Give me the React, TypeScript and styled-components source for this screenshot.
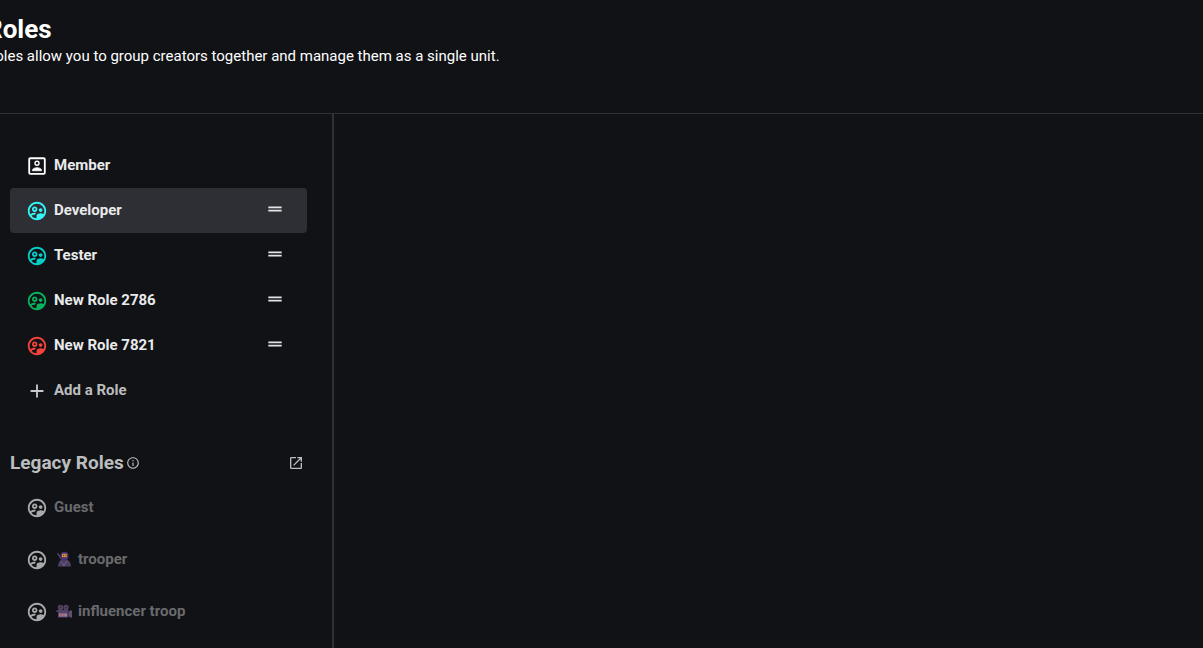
import React, { useState } from "react";
import styled, { createGlobalStyle } from "styled-components";
import {
  MdAdd,
  MdDragHandle,
  MdInfoOutline,
  MdLaunch,
  MdOutlineSupervisedUserCircle,
} from "react-icons/md";

const GlobalStyle = createGlobalStyle`
  *, *::before, *::after { box-sizing: border-box; }
  body {
    margin: 0;
    background: #111216;
    color: #ffffff;
    font-family: Roboto, "Liberation Sans", sans-serif;
    overflow: hidden;
  }
  button { font: inherit; }
`;

const Page = styled.div`
  display: flex;
  flex-direction: column;
  min-height: 100vh;
`;

const Header = styled.header`
  padding: 13px 0 46px;
  margin-left: -14px;
  border-bottom: 1px solid #303136;
`;

const Title = styled.h1`
  margin: 0;
  font-size: 26px;
  line-height: 32px;
  font-weight: 700;
`;

const Description = styled.p`
  margin: 0;
  font-size: 15px;
  line-height: 22px;
`;

const Content = styled.div`
  display: flex;
  flex: 1;
`;

const Sidebar = styled.nav`
  flex: 0 0 334px;
  padding: 29px 25px 0 10px;
  border-right: 2px solid #303136;
`;

const Details = styled.main`
  flex: 1;
`;

const List = styled.ul`
  margin: 0;
  padding: 0;
  list-style: none;
`;

const RoleIcon = styled.span<{ $color: string }>`
  display: flex;
  padding-top: 1px;
  color: ${(p) => p.$color};
  font-size: 22px;
`;

const Row = styled.li<{ $selected?: boolean; $tall?: boolean }>`
  display: flex;
  align-items: center;
  height: ${(p) => (p.$tall ? 52 : 45)}px;
  padding: ${(p) => (p.$tall ? "0 22px 0 0" : "0 22px 2px 0")};
  border-radius: 4px;
  background: ${(p) => (p.$selected ? "#2e2f34" : "transparent")};

  ${RoleIcon} {
    padding-top: ${(p) => (p.$tall ? 1 : 3)}px;
  }
`;

const RoleButton = styled.button<{ $tone?: string }>`
  display: flex;
  flex: 1;
  align-items: center;
  gap: 6px;
  height: 100%;
  padding: 0 0 0 16px;
  border: 0;
  background: none;
  color: ${(p) => p.$tone ?? "#e9eaeb"};
  font-size: 15px;
  line-height: 20px;
  font-weight: 700;
  text-align: left;
  cursor: pointer;
`;

const HandleButton = styled.button`
  display: flex;
  padding: 0 0 1px;
  border: 0;
  background: none;
  color: #e4e5e6;
  font-size: 20px;
  cursor: grab;
`;

const LegacyHeader = styled.div`
  display: flex;
  align-items: center;
  gap: 2px;
  height: 36px;
  margin-top: 32px;
  padding-right: 3px;
  color: #bcbdbf;
`;

const LegacyTitle = styled.h2`
  margin: 0;
  font-size: 19px;
  line-height: 24px;
  font-weight: 700;
`;

const InfoButton = styled.button`
  display: flex;
  padding: 0;
  border: 0;
  background: none;
  color: inherit;
  font-size: 14px;
`;

const LaunchLink = styled.a`
  display: flex;
  margin-left: auto;
  color: inherit;
  font-size: 16px;
`;

const Emoji = styled.svg`
  width: 16px;
  height: 16px;
  margin: 0 2px;
  opacity: 0.85;
`;

const LegacyLabel = styled.span`
  display: flex;
  align-items: center;
  gap: 4px;
`;

const MemberIcon = () => (
  <svg width="1em" height="1em" viewBox="0 0 24 24" fill="none" stroke="currentColor" aria-hidden="true">
    <rect x="3.500" y="3.500" width="17" height="17" rx="1.200" strokeWidth="2" />
    <circle cx="12" cy="9" r="2.200" strokeWidth="1.500" />
    <path d="M7 17.200v-.7c0-1.700 2.800-2.700 5-2.700s5 1 5 2.700v.7z" fill="currentColor" strokeWidth=".8" />
  </svg>
);

const Ninja = () => (
  <Emoji viewBox="0 0 16 16" aria-hidden="true">
    <path d="M1 2.500 2.200 2l4 6-1 1z" fill="#65547c" />
    <path d="M2 15.500c0-4 2-6.500 4-7h4c3 .5 5 3 5 7z" fill="#584870" />
    <path d="M4.500 5C4.500 2 6 .800 8.500.800S12.500 2 12.500 5 10.800 9.500 8.500 9.500 4.500 8 4.500 5z" fill="#54368a" />
    <path d="M6 2.800h5v3.400H6z" fill="#f0a43a" />
    <path d="M7 4h1v1H7zM9.500 4h1v1h-1z" fill="#7a4a1c" />
    <path d="m5 11 4 4M11 10l-4 5" stroke="#82739a" strokeWidth=".8" />
  </Emoji>
);

const Camera = () => (
  <Emoji viewBox="0 0 16 16" aria-hidden="true">
    <circle cx="4.500" cy="4.500" r="2.700" fill="#5f4a70" />
    <circle cx="10" cy="4.500" r="2.700" fill="#5f4a70" />
    <circle cx="4.500" cy="4.500" r=".8" fill="#35283f" />
    <circle cx="10" cy="4.500" r=".8" fill="#35283f" />
    <path d="M.5 7h12v7.500H2V9H.5z" fill="#5f4a76" />
    <path d="M3 10.500h8v3H3z" fill="#b59ab4" />
    <path d="M4 11.300h2V13H4zM7 11.300h1.500V13H7z" fill="#c9647c" />
    <path d="m12.500 9.500 1.500-2h2v7h-2l-1.500-2z" fill="#6c5d7e" />
  </Emoji>
);

const roles = [
  { name: "Developer", color: "#34f5f5" },
  { name: "Tester", color: "#06cfc9" },
  { name: "New Role 2786", color: "#07b35c" },
  { name: "New Role 7821", color: "#f3433b" },
];

const legacyRoles = [
  { name: "Guest", emoji: null },
  { name: "trooper", emoji: <Ninja /> },
  { name: "influencer troop", emoji: <Camera /> },
];

export default function App() {
  const [selected, setSelected] = useState("Developer");

  return (
    <Page>
      <GlobalStyle />
      <Header>
        <Title>Roles</Title>
        <Description>
          Roles allow you to group creators together and manage them as a single unit.
        </Description>
      </Header>
      <Content>
        <Sidebar aria-label="Roles">
          <List>
            <Row $selected={selected === "Member"}>
              <RoleButton onClick={() => setSelected("Member")}>
                <RoleIcon $color="#ffffff"><MemberIcon /></RoleIcon>
                Member
              </RoleButton>
            </Row>
            {roles.map((role) => (
              <Row key={role.name} $selected={selected === role.name}>
                <RoleButton onClick={() => setSelected(role.name)}>
                  <RoleIcon $color={role.color}><MdOutlineSupervisedUserCircle /></RoleIcon>
                  {role.name}
                </RoleButton>
                <HandleButton aria-label={`Reorder ${role.name}`}><MdDragHandle /></HandleButton>
              </Row>
            ))}
            <Row>
              <RoleButton $tone="#bcbdbf">
                <RoleIcon $color="#c8c9ca"><MdAdd /></RoleIcon>
                Add a Role
              </RoleButton>
            </Row>
          </List>
          <LegacyHeader>
            <LegacyTitle>Legacy Roles</LegacyTitle>
            <InfoButton aria-label="About legacy roles"><MdInfoOutline /></InfoButton>
            <LaunchLink href="#legacy" aria-label="Open legacy roles"><MdLaunch /></LaunchLink>
          </LegacyHeader>
          <List>
            {legacyRoles.map((role) => (
              <Row key={role.name} $tall>
                <RoleButton $tone="#696a6d">
                  <RoleIcon $color="#a9aaac"><MdOutlineSupervisedUserCircle /></RoleIcon>
                  <LegacyLabel>
                    {role.emoji}
                    {role.name}
                  </LegacyLabel>
                </RoleButton>
              </Row>
            ))}
          </List>
        </Sidebar>
        <Details />
      </Content>
    </Page>
  );
}
